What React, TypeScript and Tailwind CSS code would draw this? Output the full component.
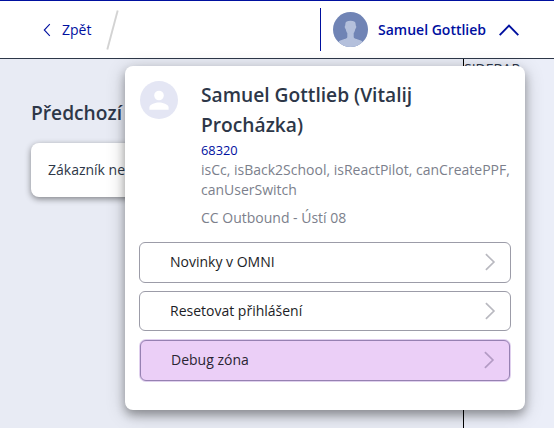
import React from 'react';

function ArrowRight() {
  return (
    <svg width="12" height="18" viewBox="0 0 12 18" fill="none" stroke="currentColor" strokeWidth="1.7">
      <path d="M1.9 1.2 9.9 9 1.9 16.8" />
    </svg>
  );
}

function MenuButton({ label, className }: { label: string; className: string }) {
  return (
    <button className={`flex items-start justify-between rounded-md border pl-[30px] text-left text-sm leading-5 ${className}`}>
      <span className="mt-[9px]">{label}</span>
      <span className="mt-[10px] text-[#b9b9c0]">
        <ArrowRight />
      </span>
    </button>
  );
}

function Header() {
  return (
    <header className="flex h-[59px] items-start border-t border-b border-t-[#00109f] border-b-[#2d3748] bg-white text-[#00109f]">
      <a className="mt-[19px] ml-[43px] flex items-center text-sm leading-5">
        <svg width="8" height="14" viewBox="0 0 8 14" fill="none" stroke="currentColor" strokeWidth="1.1">
          <path d="M6.8 1.2 1.3 7l5.5 5.8" />
        </svg>
        <span className="ml-[11px]">Zpět</span>
      </a>
      <svg className="mt-[9px] ml-[15px]" width="13" height="40" viewBox="0 0 13 40" stroke="#d3d3d3" strokeWidth="1.9">
        <path d="M11.7.4 1.3 39.4" />
      </svg>
      <div className="mt-[7px] ml-auto flex h-[43px] w-[234px] items-center border-l border-[#00109f]">
        <svg className="ml-3" width="35" height="35" viewBox="0 0 35 35">
          <defs>
            <clipPath id="avatar">
              <circle cx="17.5" cy="17.5" r="17.5" />
            </clipPath>
          </defs>
          <g clipPath="url(#avatar)">
            <path fill="#7084b5" d="M0 0h35v35H0z" />
            <path
              fill="#b4c0dc"
              d="M12.4 13.2C11.8 10 14 8.8 17.5 8.8s5.7 1.2 5.1 4.4c1 .4.8 3.2-.3 3.7-.4 2.1-1 3.4-1.6 4.1v4c0 2 5 2 8.6 4.2V36H5.9v-6.8c3.6-2.2 8.4-2.2 8.4-4.2v-4c-.6-.7-1.2-2-1.6-4.1-1.1-.5-1.3-3.3-.3-3.7Z"
            />
          </g>
        </svg>
        <span className="ml-[10px] text-sm leading-5 font-semibold">Samuel Gottlieb</span>
        <svg className="ml-[13px]" width="20" height="14" viewBox="0 0 20 14" fill="none" stroke="currentColor" strokeWidth="1.9">
          <path d="M.7 12.2 10 2.5l9.3 9.7" />
        </svg>
      </div>
    </header>
  );
}

function UserMenu() {
  return (
    <div className="absolute top-[66px] left-[125px] flex h-[344px] w-[400px] flex-col rounded-lg bg-white px-[14px] shadow-[0_4px_20px_rgba(0,0,0,0.2),0_5px_10px_rgba(0,0,0,0.3)]">
      <div className="flex">
        <svg className="mt-[15px] ml-px shrink-0" width="38" height="38" viewBox="0 0 38 38">
          <circle cx="19" cy="19" r="19" fill="#e4e6f4" />
          <circle cx="19" cy="14.5" r="4.8" fill="#fff" />
          <path fill="#fff" d="M9.4 28.8v-2.4c0-3.2 6.4-5 9.6-5s9.6 1.8 9.6 5v2.4Z" />
        </svg>
        <div className="mt-[14px] ml-[23px] text-sm leading-5 whitespace-nowrap text-[#7c7f8c]">
          <h2 className="text-[19.2px] leading-[30px] font-semibold text-[#2d3748]">
            Samuel Gottlieb (Vitalij
            <br />
            Procházka)
          </h2>
          <div className="text-[12.8px] leading-5 text-[#00109f]">68320</div>
          <div>
            isCc, isBack2School, isReactPilot, canCreatePPF,
            <br />
            canUserSwitch
          </div>
          <div className="mt-2">CC Outbound - Ústí 08</div>
        </div>
      </div>
      <div className="mt-[14px] flex flex-col text-[#1c1d26]">
        <MenuButton label="Novinky v OMNI" className="h-[41px] border-[#9c9ca8] pr-[14px]" />
        <MenuButton label="Resetovat přihlášení" className="mt-2 h-10 border-[#9c9ca8] pr-[14px]" />
        <MenuButton
          label="Debug zóna"
          className="mx-px mt-[9px] h-[41px] border-[#9681b2] bg-[#ebcff7] pr-[14px] text-[#2a2533] shadow-[0_0_0_1px_#e0d0ee] [&>span:last-child]:text-[#b39bc4]"
        />
      </div>
    </div>
  );
}

export default function App() {
  return (
    <div className="relative flex h-[428px] w-[554px] flex-col overflow-hidden bg-[#e8ebf4] font-['Open_Sans','Noto_Sans',sans-serif] text-[#2d3748]">
      <Header />
      <div className="flex flex-1">
        <main className="w-[463px] pt-[39px] pl-[31px]">
          <h1 className="text-[19.2px] leading-[30px] font-semibold">Předchozí</h1>
          <div className="mt-[15px] h-[54px] w-[400px] rounded-lg bg-white px-[17px] py-[17px] text-sm leading-5 shadow-[0_2px_6px_rgba(0,0,0,0.45)]">
            Zákazník nemá
          </div>
        </main>
        <aside className="flex-1 border-l border-black bg-[#ebeef8] text-sm leading-5">SIDEBAR</aside>
      </div>
      <UserMenu />
    </div>
  );
}
